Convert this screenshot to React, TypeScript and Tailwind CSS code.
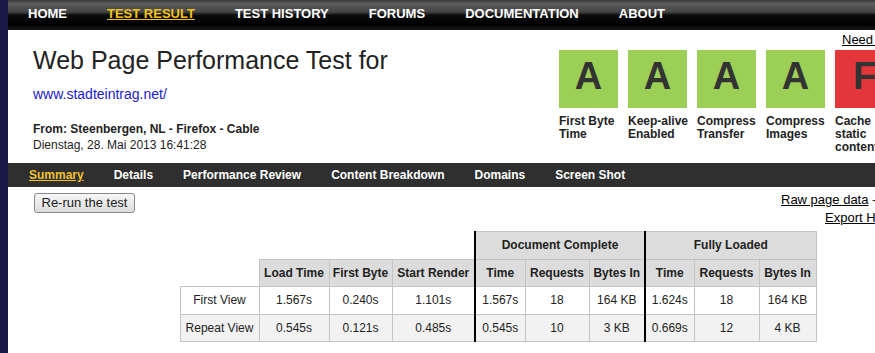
import React from 'react';

const topNav = ['HOME', 'TEST RESULT', 'TEST HISTORY', 'FORUMS', 'DOCUMENTATION', 'ABOUT'];
const subNav = ['Summary', 'Details', 'Performance Review', 'Content Breakdown', 'Domains', 'Screen Shot'];

const grades = [
  { grade: 'A', bad: false, label: ['First Byte', 'Time'] },
  { grade: 'A', bad: false, label: ['Keep-alive', 'Enabled'] },
  { grade: 'A', bad: false, label: ['Compress', 'Transfer'] },
  { grade: 'A', bad: false, label: ['Compress', 'Images'] },
  { grade: 'F', bad: true, label: ['Cache', 'static', 'content'] },
];

const rows = [
  { name: 'First View', cells: ['1.567s', '0.240s', '1.101s', '1.567s', '18', '164 KB', '1.624s', '18', '164 KB'], alt: false },
  { name: 'Repeat View', cells: ['0.545s', '0.121s', '0.485s', '0.545s', '10', '3 KB', '0.669s', '12', '4 KB'], alt: true },
];

const colWidths = [79, 70, 63, 83, 50, 64, 56, 49, 65, 57];

export default function App() {
  return (
    <div className="flex min-h-screen w-full overflow-hidden bg-white font-['Liberation_Sans',Arial,sans-serif] text-[#222]">
      {/* left page edge */}
      <div className="w-[8px] shrink-0 bg-[#1b1a47]" />

      <div className="w-[980px] shrink-0">
        {/* Top navigation */}
        <div className="flex h-[30px] gap-[40px] bg-[linear-gradient(to_bottom,#3a3a3a_0%,#5c5c5c_12%,#444_40%,#0c0c0c_50%,#000_80%,#161616_100%)] pl-[20px] pt-[6px]">
          {topNav.map((item) => (
            <span
              key={item}
              className={`text-[13px] font-bold leading-[15px] whitespace-nowrap ${
                item === 'TEST RESULT' ? 'text-[#f2c21c] underline' : 'text-white'
              }`}
            >
              {item}
            </span>
          ))}
        </div>

        {/* Header */}
        <div className="flex h-[133px]">
          <div className="w-[551px] shrink-0 pl-[25px]">
            <h1 className="mt-[15px] text-[25px] leading-[30px] font-normal text-[#222]">
              Web Page Performance Test for
            </h1>
            <a className="mt-[11px] block text-[14px] leading-[16px] text-[#1a1acc]">www.stadteintrag.net/</a>
            <p className="mt-[19px] text-[12px] font-bold leading-[16px]">From: Steenbergen, NL - Firefox - Cable</p>
            <p className="text-[12px] leading-[16px]">Dienstag, 28. Mai 2013 16:41:28</p>
          </div>

          <div className="flex-1">
            <div className="mt-[2px] pl-[283px] text-[13px] leading-[15px] whitespace-nowrap">
              <a className="text-black underline">Need help improving?</a>
            </div>
            <div className="mt-[3px] flex gap-[10px]">
              {grades.map((g, i) => (
                <div key={i} className="w-[59px] shrink-0">
                  <div
                    className={`flex h-[58px] justify-center pt-[7px] text-[38px] font-bold leading-[38px] text-[#333] ${
                      g.bad ? 'bg-[#e3363a]' : 'bg-[#9bcf56]'
                    }`}
                  >
                    {g.grade}
                  </div>
                  <div className="mt-[7px] text-[12px] font-bold leading-[13px] whitespace-nowrap">
                    {g.label.map((l) => (
                      <div key={l}>{l}</div>
                    ))}
                  </div>
                </div>
              ))}
            </div>
          </div>
        </div>

        {/* Sub navigation */}
        <div className="flex h-[24px] items-center gap-[30px] bg-[#2f2f2f] pl-[21px]">
          {subNav.map((item) => (
            <span
              key={item}
              className={`text-[12px] font-bold whitespace-nowrap ${
                item === 'Summary' ? 'text-[#f2c12e] underline' : 'text-white'
              }`}
            >
              {item}
            </span>
          ))}
        </div>

        {/* Actions */}
        <div className="flex items-start">
          <button className="ml-[26px] mt-[6px] h-[20px] w-[101px] rounded-[3px] border border-[#8a8a8a] bg-[linear-gradient(to_bottom,#f7f7f7,#dcdcdc)] text-[13px] leading-[18px] text-[#222]">
            Re-run the test
          </button>
          <div className="ml-[646px] mt-[4px] text-[13px] leading-[18px] whitespace-nowrap">
            <div>
              <a className="text-black underline">Raw page data</a> - <a className="text-[#e8b400] underline">Raw object data</a>
            </div>
            <div className="pl-[44px]">
              <a className="text-black underline">Export HTTP Archive (.har)</a>
            </div>
          </div>
        </div>

        {/* Results table */}
        <table className="mx-auto mt-[4px] w-[636px] table-fixed border-collapse text-center text-[12px]">
          <colgroup>
            {colWidths.map((w, i) => (
              <col key={i} style={{ width: w }} />
            ))}
          </colgroup>
          <thead>
            <tr className="h-[27.5px]">
              <td colSpan={4} />
              <th colSpan={3} className="border border-[#c4c4c4] border-l-2 border-l-black bg-[#dcdcdc] font-bold">
                Document Complete
              </th>
              <th colSpan={3} className="border border-[#c4c4c4] border-l-2 border-l-black bg-[#dcdcdc] font-bold">
                Fully Loaded
              </th>
            </tr>
            <tr className="h-[27.5px]">
              <td />
              {['Load Time', 'First Byte', 'Start Render', 'Time', 'Requests', 'Bytes In', 'Time', 'Requests', 'Bytes In'].map(
                (h, i) => (
                  <th
                    key={i}
                    className={`border border-[#c4c4c4] bg-[#dcdcdc] font-bold whitespace-nowrap ${
                      i === 3 || i === 6 ? 'border-l-2 border-l-black' : ''
                    }`}
                  >
                    {h}
                  </th>
                )
              )}
            </tr>
          </thead>
          <tbody>
            {rows.map((r) => (
              <tr key={r.name} className={`h-[27.5px] ${r.alt ? 'bg-[#f2f2f2]' : 'bg-white'}`}>
                <td className="border border-[#c4c4c4] whitespace-nowrap">{r.name}</td>
                {r.cells.map((c, i) => (
                  <td
                    key={i}
                    className={`border border-[#c4c4c4] whitespace-nowrap ${
                      i === 3 || i === 6 ? 'border-l-2 border-l-black' : ''
                    }`}
                  >
                    {c}
                  </td>
                ))}
              </tr>
            ))}
          </tbody>
        </table>
      </div>
    </div>
  );
}
